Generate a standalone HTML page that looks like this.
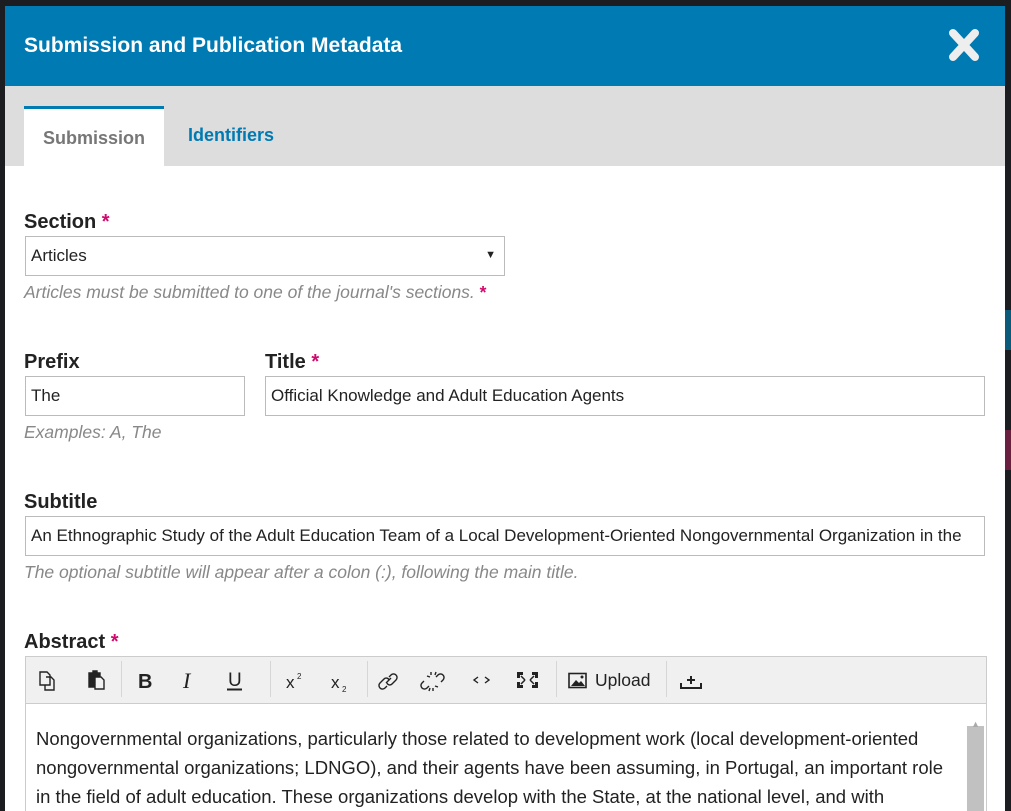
<!DOCTYPE html>
<html><head><style>
*{box-sizing:border-box;margin:0;padding:0}
html,body{width:1011px;height:811px;overflow:hidden}
body{background:#1b1d20;font-family:"Liberation Sans",sans-serif;position:relative}
.modal{position:absolute;left:5px;top:6px;width:1000px;height:805px;background:#fff;overflow:hidden}
.hdr{height:80px;background:#007ab2;color:#fff;font-weight:bold;font-size:21px;padding:28px 0 0 19px;position:relative}
.x{position:absolute;right:25px;top:22px;width:32px;height:34px}
.tabs{height:80px;background:#ddd;position:relative}
.tab{position:absolute;top:20px;height:60px;font-weight:bold;font-size:18px;padding-top:19px;text-align:center}
.t1{left:19px;width:140px;background:#fff;border-top:3px solid #007ab2;color:#777}
.t2{left:183px;color:#007ab2}
.lbl{position:absolute;font-weight:bold;font-size:20px;color:#222}
.req{color:#d00a6c}
.in{position:absolute;border:1px solid #bbb;height:40px;font-size:17px;padding:9px 0 0 5px;color:#222;white-space:nowrap;overflow:hidden}
.help{position:absolute;font-style:italic;color:#888;font-size:17.5px}
.tb{position:absolute;left:20px;top:650px;width:962px;height:48px;background:#f0f0f0;border:1px solid #ccc;color:#222}
.ed{position:absolute;left:20px;top:698px;width:962px;height:130px;border:1px solid #ccc;border-top:none;font-size:18.5px;line-height:29px;color:#222;padding:20px 28px 0 10px}
.sb{position:absolute;right:2px;top:22px;width:17px;height:120px;background:#c1c1c1}
</style></head><body>
<div style="position:absolute;left:1005px;top:310px;width:6px;height:40px;background:#0c5a7a"></div>
<div style="position:absolute;left:1005px;top:430px;width:6px;height:40px;background:#6a1e40"></div>
<div class="modal">
<div class="hdr">Submission and Publication Metadata
<svg class="x" viewBox="0 0 32 34"><path d="M5 5L27 29M27 5L5 29" stroke="#eee" stroke-width="8" stroke-linecap="round"/></svg></div>
<div class="tabs"><div class="tab t1">Submission</div><div class="tab t2">Identifiers</div></div>
<div class="lbl" style="left:19px;top:205px">Section <span class="req">*</span></div>
<div class="in" style="left:20px;top:230px;width:480px">Articles<span style="position:absolute;right:8px;top:12px;font-size:11px">▼</span></div>
<div class="help" style="left:19px;top:276px">Articles must be submitted to one of the journal's sections. <span class="req" style="font-style:normal;font-weight:bold">*</span></div>
<div class="lbl" style="left:19px;top:345px">Prefix</div>
<div class="lbl" style="left:260px;top:345px">Title <span class="req">*</span></div>
<div class="in" style="left:20px;top:370px;width:220px">The</div>
<div class="in" style="left:260px;top:370px;width:720px">Official Knowledge and Adult Education Agents</div>
<div class="help" style="left:19px;top:416px">Examples: A, The</div>
<div class="lbl" style="left:19px;top:485px">Subtitle</div>
<div class="in" style="left:20px;top:510px;width:960px">An Ethnographic Study of the Adult Education Team of a Local Development-Oriented Nongovernmental Organization in the</div>
<div class="help" style="left:19px;top:556px">The optional subtitle will appear after a colon (:), following the main title.</div>
<div class="lbl" style="left:19px;top:625px">Abstract <span class="req">*</span></div>
<div class="tb">
<svg width="962" height="48" style="position:absolute;left:-1px;top:-2px" fill="none" stroke="#222" stroke-width="1.4">
<g stroke="#d6d6d6" stroke-width="1"><path d="M96.5 6v36M245.5 6v36M342.5 6v36M531.5 6v36M641.5 6v36"/></g>
<path d="M15 17h7l3 3v10h-10z M21 22h5l3 3v10h-9v-5"/>
<path d="M64 18h4v-2h4v2h3v14h-11z" fill="#222"/><path d="M70 22h6l3 3v9h-9z" fill="#f0f0f0"/>
<text x="113" y="33" font-family="Liberation Sans" font-weight="bold" font-size="20" fill="#222" stroke="none">B</text>
<text x="158" y="33" font-family="Liberation Serif" font-style="italic" font-size="22" fill="#222" stroke="none">I</text>
<text x="203" y="31" font-family="Liberation Sans" font-size="19" fill="#222" stroke="none">U</text>
<path d="M202 34.5h15" stroke-width="2"/>
<text x="261" y="33" font-family="Liberation Sans" font-size="17" fill="#222" stroke="none">x</text>
<text x="272" y="24" font-family="Liberation Sans" font-size="8" fill="#222" stroke="none">2</text>
<text x="306" y="33" font-family="Liberation Sans" font-size="17" fill="#222" stroke="none">x</text>
<text x="317" y="37" font-family="Liberation Sans" font-size="8" fill="#222" stroke="none">2</text>
<path d="M362 31l-2 2a3 3 0 0 1-5-5l4-4a3 3 0 0 1 5 1 M364 22l2-2a3 3 0 0 1 5 5l-4 4a3 3 0 0 1-5-1 M361 28l5-5"/>
<path d="M404 31l-2 2a3 3 0 0 1-5-5l2-2 M411 22l2-2a3 3 0 0 1 5 5l-2 2 M406 17v3M411 17l-1 3M402 21l3 1M408 36v-3M404 36l1-3M413 32l-3-1"/>
<path d="M453 22l-4 3 4 3M460 22l4 3-4 3"/>
<path d="M492 17h6v3h-3v3h-3z M507 17h6v6h-3v-3h-3z M492 27h3v3h3v3h-6z M510 27h3v6h-6v-3h3z" fill="#222" stroke="none"/>
<path d="M496 21l4 4M509 21l-4 4M496 29l4-4M509 29l-4-4" stroke-width="1.5"/>
<rect x="544" y="18.5" width="17" height="14" stroke-width="1.6"/><path d="M546 31l5-6 3 3 2-2 4 5z" fill="#222" stroke="none"/><circle cx="557" cy="22" r="1.5" fill="#222" stroke="none"/>
<text x="570" y="31" font-family="Liberation Sans" font-size="17.5" fill="#222" stroke="none">Upload</text>
<path d="M656 28v5h20v-5M666 21v8M662 25h8" stroke-width="2"/>
</svg>
</div>
<div class="ed">Nongovernmental organizations, particularly those related to development work (local development-oriented nongovernmental organizations; LDNGO), and their agents have been assuming, in Portugal, an important role in the field of adult education. These organizations develop with the State, at the national level, and with<div class="sb"></div><span style="position:absolute;right:6px;top:6px;font-size:9px;color:#aaa">▲</span></div>
</div>
</body></html>
